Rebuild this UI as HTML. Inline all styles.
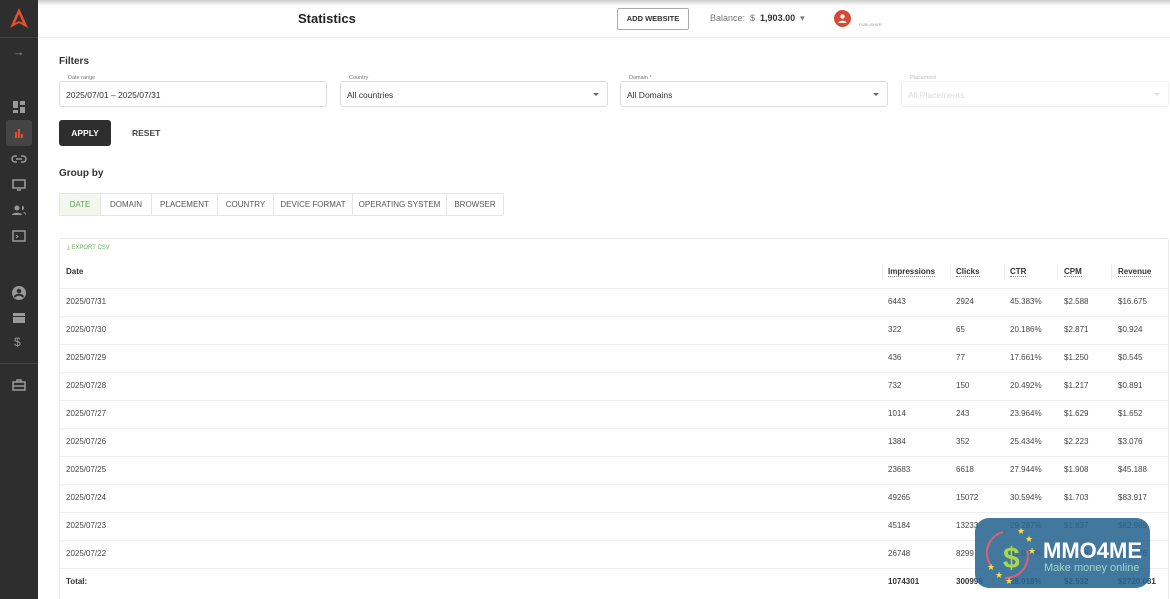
<!DOCTYPE html>
<html><head><style>
*{box-sizing:border-box;margin:0;padding:0}
html,body{width:1170px;height:599px;overflow:hidden}
body{font-family:"Liberation Sans",Arial,sans-serif;background:#fff;position:relative;color:#333}
.sb{position:absolute;left:0;top:0;width:38px;height:599px;background:#2e2e2e}
.sb .ic{position:absolute;left:11px;width:16px;height:16px}
.top{position:absolute;left:38px;top:0;right:0;height:38px;border-bottom:1px solid #eee;background:linear-gradient(#cfcfcf 0,#fff 6px)}
.abs{position:absolute}
.fld{position:absolute;top:81px;height:26px;border:1px solid #ddd;border-radius:3px;font-size:8.5px;padding:8px 6px;color:#333}
.fld .lb{position:absolute;top:-7px;left:6px;background:#fff;padding:0 2px;font-size:5.5px;color:#777}
.fld .ar{position:absolute;right:8px;top:11px;border-left:3px solid transparent;border-right:3px solid transparent;border-top:3px solid #666}
.tabs{position:absolute;left:59px;top:193px;height:23px;display:flex;border:1px solid #e6e6e6;border-radius:2px}
.tabs div{font-size:8px;color:#555;text-align:center;line-height:21px;border-right:1px solid #e6e6e6}
.tbl{position:absolute;left:59px;top:238px;width:1110px;height:370px;border:1px solid #e8e8e8;border-radius:3px}
.row{position:absolute;left:0;width:1108px;height:28px;border-top:1px solid #eee;font-size:8px;color:#444}
.row span{position:absolute;top:8px}
.hd span{font-weight:bold;color:#333}
.hd span.u{border-bottom:1px dotted #888}
</style></head><body>
<div class="sb">
<svg class="abs" style="left:9px;top:7px" width="20" height="22" viewBox="0 0 20 22"><path d="M10 1 L19 21 L10 16 L1 21 Z M10 7 L6 16 L10 14 L14 16 Z" fill="#e8502d" fill-rule="evenodd"/></svg>
<div class="abs" style="left:0;top:37px;width:38px;height:1px;background:#444"></div>
<div class="abs" style="left:12px;top:44px;color:#888;font-size:13px">→</div>
<svg class="ic" style="top:99px" viewBox="0 0 16 16"><path d="M2 2h5v7H2zM9 2h5v4H9zM9 8h5v6H9zM2 11h5v3H2z" fill="#999"/></svg>
<div class="abs" style="left:6px;top:120px;width:26px;height:26px;background:#444;border-radius:3px"></div>
<svg class="ic" style="top:125px" viewBox="0 0 16 16"><path d="M4 7h2v6H4zM7 4h2v9H7zM10 9h2v4h-2z" fill="#e8502d"/></svg>
<svg class="ic" style="top:151px" viewBox="0 0 16 16"><path d="M6 5H4a3 3 0 000 6h2M10 5h2a3 3 0 010 6h-2M5 8h6" stroke="#999" stroke-width="1.5" fill="none"/></svg>
<svg class="ic" style="top:177px" viewBox="0 0 16 16"><path d="M2 3h12v8H2zM6 13h4" stroke="#999" stroke-width="1.6" fill="none"/></svg>
<svg class="ic" style="top:202px" viewBox="0 0 16 16"><circle cx="6" cy="6" r="2.5" fill="#999"/><path d="M1 13c0-3 10-3 10 0zM11 4a2 2 0 010 4M12 10c2 0 3 1 3 3" fill="#999"/></svg>
<svg class="ic" style="top:228px" viewBox="0 0 16 16"><path d="M2 3h12v10H2z" stroke="#999" stroke-width="1.5" fill="none"/><path d="M5 7l2 1.5L5 10" stroke="#999" fill="none"/></svg>
<svg class="ic" style="top:285px" viewBox="0 0 16 16"><circle cx="8" cy="8" r="7" fill="#999"/><circle cx="8" cy="6" r="2.3" fill="#2e2e2e"/><path d="M3.5 12c2-3 7-3 9 0" stroke="#2e2e2e" stroke-width="2" fill="none"/></svg>
<svg class="ic" style="top:310px" viewBox="0 0 16 16"><path d="M2 3h12v3H2zM2 7h12v6H2z" fill="#999"/></svg>
<div class="abs" style="left:14px;top:335px;color:#999;font-size:12px">$</div>
<div class="abs" style="left:0;top:363px;width:38px;height:1px;background:#444"></div>
<svg class="ic" style="top:377px" viewBox="0 0 16 16"><path d="M2 5h12v8H2zM6 5V3h4v2M2 9h12" stroke="#999" stroke-width="1.5" fill="none"/></svg>
</div>
<div class="top"></div>
<div class="abs" style="left:298px;top:11px;font-size:13px;font-weight:bold;color:#222">Statistics</div>
<div class="abs" style="left:617px;top:8px;width:72px;height:22px;border:1px solid #aaa;border-radius:2px;font-size:7.5px;font-weight:bold;text-align:center;line-height:20px;color:#333">ADD WEBSITE</div>
<div class="abs" style="left:710px;top:13px;font-size:9px;color:#777">Balance:&nbsp; $&nbsp; <b style="color:#333">1,903.00</b> &nbsp;▾</div>
<div class="abs" style="left:834px;top:10px;width:17px;height:17px;border-radius:50%;background:#d64a35"></div>
<svg class="abs" style="left:837px;top:13px" width="11" height="11" viewBox="0 0 11 11"><circle cx="5.5" cy="3.5" r="2.2" fill="#fff"/><path d="M1.5 10c0-3 8-3 8 0z" fill="#fff"/></svg>
<div class="abs" style="left:859px;top:22px;font-size:4px;color:#999">PUBLISHER</div>
<div class="abs" style="left:59px;top:56px;font-size:10px;font-weight:bold;color:#333">Filters</div>
<div class="fld" style="left:59px;width:268px"><span class="lb">Date range</span>2025/07/01 – 2025/07/31</div>
<div class="fld" style="left:340px;width:268px"><span class="lb">Country</span>All countries<i class="ar"></i></div>
<div class="fld" style="left:620px;width:268px"><span class="lb">Domain *</span>All Domains<i class="ar"></i></div>
<div class="fld" style="left:901px;width:268px;color:#ddd;border-color:#f0f0f0"><span class="lb" style="color:#bbb">Placement</span>All Placements<i class="ar" style="border-top-color:#ddd"></i></div>
<div class="abs" style="left:59px;top:120px;width:52px;height:26px;background:#2e2e2e;border-radius:3px;color:#fff;font-size:8.5px;font-weight:bold;text-align:center;line-height:26px">APPLY</div>
<div class="abs" style="left:132px;top:128px;font-size:8.5px;font-weight:bold;color:#444">RESET</div>
<div class="abs" style="left:59px;top:168px;font-size:10px;font-weight:bold;color:#333">Group by</div>
<div class="tabs"><div style="width:41px;color:#5aa64a;background:#f2f8f0">DATE</div><div style="width:51px">DOMAIN</div><div style="width:66px">PLACEMENT</div><div style="width:56px">COUNTRY</div><div style="width:79px">DEVICE FORMAT</div><div style="width:94px">OPERATING SYSTEM</div><div style="width:56px;border:0">BROWSER</div></div>
<div class="tbl">
<div class="abs" style="left:7px;top:6px;font-size:6px;color:#6ab05a">⤓ EXPORT CSV</div>
<div class="row hd" style="top:20px;border:0;height:29px"><span style="left:6px">Date</span><span class="u" style="left:828px">Impressions</span><span class="u" style="left:896px">Clicks</span><span class="u" style="left:950px">CTR</span><span class="u" style="left:1004px">CPM</span><span class="u" style="left:1058px">Revenue</span>
<i class="abs" style="left:822px;top:5px;width:1px;height:16px;background:#eee"></i><i class="abs" style="left:890px;top:5px;width:1px;height:16px;background:#eee"></i><i class="abs" style="left:944px;top:5px;width:1px;height:16px;background:#eee"></i><i class="abs" style="left:997px;top:5px;width:1px;height:16px;background:#eee"></i><i class="abs" style="left:1051px;top:5px;width:1px;height:16px;background:#eee"></i></div>
<div class="row" style="top:49px"><span style="left:6px">2025/07/31</span><span style="left:828px">6443</span><span style="left:896px">2924</span><span style="left:950px">45.383%</span><span style="left:1004px">$2.588</span><span style="left:1058px">$16.675</span></div>
<div class="row" style="top:77px"><span style="left:6px">2025/07/30</span><span style="left:828px">322</span><span style="left:896px">65</span><span style="left:950px">20.186%</span><span style="left:1004px">$2.871</span><span style="left:1058px">$0.924</span></div>
<div class="row" style="top:105px"><span style="left:6px">2025/07/29</span><span style="left:828px">436</span><span style="left:896px">77</span><span style="left:950px">17.661%</span><span style="left:1004px">$1.250</span><span style="left:1058px">$0.545</span></div>
<div class="row" style="top:133px"><span style="left:6px">2025/07/28</span><span style="left:828px">732</span><span style="left:896px">150</span><span style="left:950px">20.492%</span><span style="left:1004px">$1.217</span><span style="left:1058px">$0.891</span></div>
<div class="row" style="top:161px"><span style="left:6px">2025/07/27</span><span style="left:828px">1014</span><span style="left:896px">243</span><span style="left:950px">23.964%</span><span style="left:1004px">$1.629</span><span style="left:1058px">$1.652</span></div>
<div class="row" style="top:189px"><span style="left:6px">2025/07/26</span><span style="left:828px">1384</span><span style="left:896px">352</span><span style="left:950px">25.434%</span><span style="left:1004px">$2.223</span><span style="left:1058px">$3.076</span></div>
<div class="row" style="top:217px"><span style="left:6px">2025/07/25</span><span style="left:828px">23683</span><span style="left:896px">6618</span><span style="left:950px">27.944%</span><span style="left:1004px">$1.908</span><span style="left:1058px">$45.188</span></div>
<div class="row" style="top:245px"><span style="left:6px">2025/07/24</span><span style="left:828px">49265</span><span style="left:896px">15072</span><span style="left:950px">30.594%</span><span style="left:1004px">$1.703</span><span style="left:1058px">$83.917</span></div>
<div class="row" style="top:273px"><span style="left:6px">2025/07/23</span><span style="left:828px">45184</span><span style="left:896px">13233</span><span style="left:950px">29.287%</span><span style="left:1004px">$1.837</span><span style="left:1058px">$82.989</span></div>
<div class="row" style="top:301px"><span style="left:6px">2025/07/22</span><span style="left:828px">26748</span><span style="left:896px">8299</span><span style="left:950px">31.027%</span><span style="left:1004px">$2.216</span><span style="left:1058px">$59.276</span></div>
<div class="row hd" style="top:329px"><span style="left:6px">Total:</span><span style="left:828px">1074301</span><span style="left:896px">300999</span><span style="left:950px">28.018%</span><span style="left:1004px">$2.532</span><span style="left:1058px">$2720.081</span></div>
</div>
<div class="abs" style="left:975px;top:518px;width:175px;height:70px;border-radius:14px;background:rgba(40,100,145,.88)">
<svg class="abs" style="left:6px;top:8px" width="60" height="58" viewBox="0 0 60 58"><path d="M22 6 A22 22 0 0 0 10 40" stroke="#e06070" stroke-width="2" fill="none"/><path d="M24 52 A22 22 0 0 0 46 24" stroke="#e06070" stroke-width="2" fill="none"/><text x="22" y="42" font-size="30" font-weight="bold" fill="#a8d84a" font-family="Liberation Sans">$</text><g fill="#f5e050" font-size="9"><text x="36" y="8">★</text><text x="44" y="16">★</text><text x="47" y="28">★</text><text x="6" y="44">★</text><text x="14" y="52">★</text><text x="24" y="58">★</text></g></svg>
<div class="abs" style="left:68px;top:20px;font-size:22px;font-weight:bold;color:#fff">MMO4ME</div>
<div class="abs" style="left:69px;top:44px;font-size:11px;color:#9ed8c8">Make money online</div>
</div>
</body></html>
